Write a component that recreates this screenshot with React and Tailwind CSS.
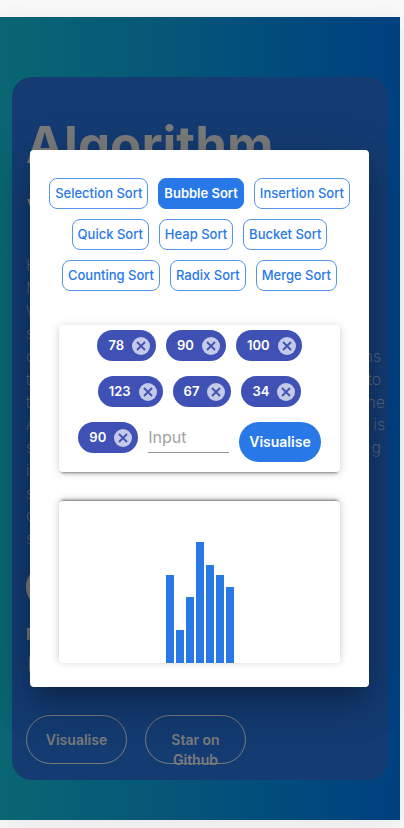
import React, { useState } from "react";

const sortRows = [
  ["Selection Sort", "Bubble Sort", "Insertion Sort"],
  ["Quick Sort", "Heap Sort", "Bucket Sort"],
  ["Counting Sort", "Radix Sort", "Merge Sort"],
];

const chipRows = [
  [78, 90, 100],
  [123, 67, 34],
];

const bars = [90, 34, 67, 123, 100, 90, 78];

const introLines = [
  ["H"],
  ["M"],
  ["W"],
  ["s"],
  ["o", "ns", "pr-1"],
  ["t", "to", "pr-1"],
  ["t", "ne"],
  ["A", "n is"],
  ["s", "g", "pr-1"],
  ["i"],
  ["s"],
  ["o"],
  ["s"],
];

function Chip({ value }) {
  return (
    <span className="flex h-[31px] items-center gap-2 rounded-full bg-[#3f51b5] pr-[6px] pl-[11px] text-[13px] font-semibold text-white">
      {value}
      <button type="button" aria-label={"Remove " + value} className="size-[18px] rounded-full">
        <svg viewBox="0 0 18 18" className="size-[18px]">
          <circle cx="9" cy="9" r="9" fill="#c5cae9" />
          <path d="M5 5l8 8M13 5l-8 8" stroke="#3f51b5" strokeWidth="1.8" />
        </svg>
      </button>
    </span>
  );
}

function SortButton({ name, active, onClick }) {
  return (
    <button
      type="button"
      onClick={onClick}
      className={
        "h-[31px] rounded-lg border px-[5px] text-[13px] whitespace-nowrap " +
        (active
          ? "border-[#2878e8] bg-[#2878e8] font-semibold text-white"
          : "border-[#5594ed] bg-white font-medium text-[#2878e8]")
      }
    >
      {name}
    </button>
  );
}

function Modal() {
  const [selected, setSelected] = useState("Bubble Sort");
  return (
    <div
      role="dialog"
      aria-label="Sorting visualiser"
      className="flex w-full flex-col rounded bg-white px-5 pt-7 pb-6 shadow-[0_11px_15px_-7px_rgba(0,0,0,0.2),0_24px_38px_3px_rgba(0,0,0,0.14),0_9px_46px_8px_rgba(0,0,0,0.12)]"
    >
      <div className="flex flex-col gap-[10px]">
        {sortRows.map((row) => (
          <div key={row[0]} className="flex justify-center gap-[10px]">
            {row.map((name) => (
              <SortButton key={name} name={name} active={name === selected} onClick={() => setSelected(name)} />
            ))}
          </div>
        ))}
      </div>

      <div className="mx-[9px] mt-[34px] flex flex-col gap-[15px] rounded pt-[5px] pb-[10px] shadow-[0_3px_3px_-2px_rgba(0,0,0,0.45),0_1px_8px_rgba(0,0,0,0.18)]">
        {chipRows.map((row) => (
          <div key={row[0]} className="flex justify-center gap-[10px]">
            {row.map((value) => (
              <Chip key={value} value={value} />
            ))}
          </div>
        ))}
        <div className="flex items-start justify-center gap-[10px]">
          <Chip value={90} />
          <input
            aria-label="Input"
            placeholder="Input"
            className="h-[31px] w-[81px] border-b border-[#949494] bg-transparent text-base text-black outline-none placeholder:text-[#a2a2a2]"
          />
          <button type="button" className="h-10 rounded-full bg-[#2878e8] px-[10px] text-sm font-semibold text-white">
            Visualise
          </button>
        </div>
      </div>

      <div className="mx-[9px] mt-[29px] flex h-[162px] items-end justify-center gap-[2px] rounded shadow-[0_-3px_3px_-2px_rgba(0,0,0,0.5),0_-1px_8px_rgba(0,0,0,0.2)]">
        {bars.map((value, index) => (
          <div key={index} className="w-2 bg-[#2878e8]" style={{ height: Math.round(value * 0.98) }} />
        ))}
      </div>
    </div>
  );
}

export default function App() {
  return (
    <div className="min-h-screen overflow-hidden bg-[#f9f9f9] pt-[17px] pb-2 font-[Inter,'Open_Sans',sans-serif]">
      <main className="relative mr-1 bg-linear-to-r from-[#0a6672] via-[#055379] via-50% to-[#004080] px-3 pt-[60px] pb-10 shadow-[0_4px_24px_rgba(0,0,0,0.08)]">
        <section className="rounded-[20px] bg-[#143c73] pt-[31px] pr-[3px] pb-4 pl-[14px] text-[#7b7b7b]">
          <h1 className="text-[51px] leading-[73px] font-bold">
            Algorithm
            <br />V
          </h1>
          <div className="flex h-[295px] flex-col justify-between text-base leading-[22px] font-extralight text-[#687080]">
            {introLines.map(([start, end, inset], index) => (
              <p key={index} className="flex justify-between">
                <span>{start}</span>
                <span className={inset}>{end}</span>
              </p>
            ))}
          </div>
          <div className="mt-[15px] size-[46px] rounded-full bg-[#7b7b7b]" />
          <p className="mt-3 text-base leading-6 font-bold">F</p>
          <div className="mt-2 ml-[3px] size-5 rounded border border-[#7b7b7b]" />
          <div className="mt-[41px] flex gap-[18px]">
            <button
              type="button"
              className="flex h-[49px] w-[101px] items-start justify-center rounded-full border border-[#7b7b7b] pt-[14px] text-sm font-semibold"
            >
              Visualise
            </button>
            <a
              href="#github"
              className="flex h-[49px] w-[101px] items-start justify-center rounded-full border border-[#7b7b7b] px-5 pt-[14px] text-center text-sm font-semibold"
            >
              Star on Github
            </a>
          </div>
        </section>
        <div className="absolute inset-0 flex items-center pr-[31px] pl-[30px]">
          <Modal />
        </div>
      </main>
    </div>
  );
}
